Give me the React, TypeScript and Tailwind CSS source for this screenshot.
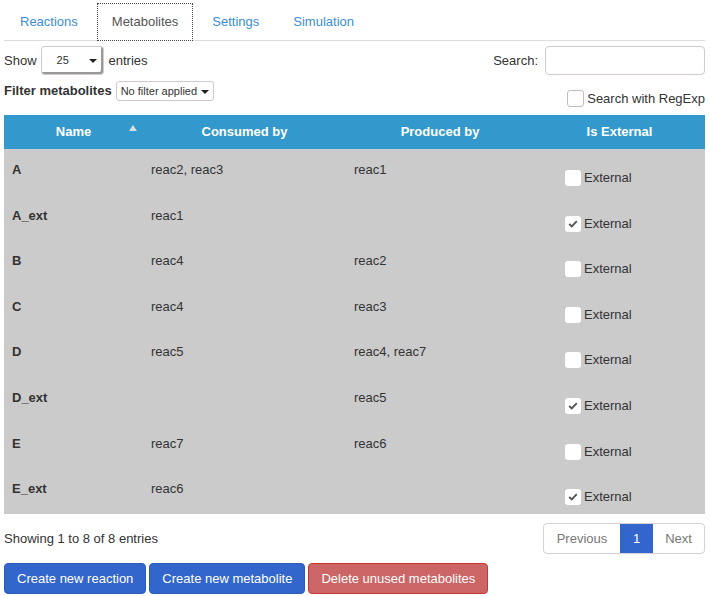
import React from "react";

const rows: { name: string; consumed: string; produced: string; ext: boolean }[] = [
  { name: "A", consumed: "reac2, reac3", produced: "reac1", ext: false },
  { name: "A_ext", consumed: "reac1", produced: "", ext: true },
  { name: "B", consumed: "reac4", produced: "reac2", ext: false },
  { name: "C", consumed: "reac4", produced: "reac3", ext: false },
  { name: "D", consumed: "reac5", produced: "reac4, reac7", ext: false },
  { name: "D_ext", consumed: "", produced: "reac5", ext: true },
  { name: "E", consumed: "reac7", produced: "reac6", ext: false },
  { name: "E_ext", consumed: "reac6", produced: "", ext: true },
];

function Check({ checked }: { checked: boolean }) {
  return (
    <span className="inline-flex h-[16px] w-[16px] items-center justify-center rounded-[3px] bg-white">
      {checked && (
        <svg width="10" height="8" viewBox="0 0 10 8">
          <path d="M1.2 4 L3.8 6.4 L8.8 1.2" fill="none" stroke="#555" strokeWidth="1.9" />
        </svg>
      )}
    </span>
  );
}

export default function App() {
  const tabs = ["Reactions", "Metabolites", "Settings", "Simulation"];
  return (
    <div
      className="w-[710px] h-[596px] bg-white px-[4px] text-[13px] text-[#333]"
      style={{ fontFamily: '"Liberation Sans", Arial, sans-serif' }}
    >
      {/* Tabs */}
      <div className="flex gap-[4px] border-b border-[#ddd] pl-[1px] pt-[3px] w-[701px]">
        {tabs.map((t) => (
          <div
            key={t}
            className={
              t === "Metabolites"
                ? "mb-[-1px] flex h-[38px] items-center border border-dotted border-[#444] bg-white px-[14px] text-[#555]"
                : "mb-[-1px] flex h-[38px] items-center border border-transparent px-[14px] text-[#3a8ed6]"
            }
          >
            {t}
          </div>
        ))}
      </div>

      {/* Show / Search */}
      <div className="mt-[5px] flex h-[29px] w-[701px] items-center justify-between">
        <div className="flex items-center">
          <span>Show</span>
          <div className="relative ml-[4px] flex h-[29px] w-[63px] items-center rounded-[3px] border border-[#d3c8d3] pl-[15px] text-[11px] shadow-[inset_-2px_-2px_0_#999]">
            25
            <span className="absolute right-[6px] top-[12px] h-0 w-0 border-l-[4px] border-r-[4px] border-t-[4px] border-l-transparent border-r-transparent border-t-[#222]" />
          </div>
          <span className="ml-[5px]">entries</span>
        </div>
        <div className="flex items-center">
          <span>Search:</span>
          <div className="ml-[7px] h-[29px] w-[160px] rounded-[4px] border border-[#d3c8d3]" />
        </div>
      </div>

      {/* Filter */}
      <div className="relative mt-[6px] h-[34px] w-[701px]">
        <div className="flex items-center">
          <span className="font-bold">Filter metabolites</span>
          <div className="ml-[4px] flex h-[20px] items-center rounded-[3px] border border-[#d3c8d3] px-[4px] text-[11px]">
            No filter applied
            <span className="ml-[4px] mt-[1px] h-0 w-0 border-l-[4px] border-r-[4px] border-t-[4px] border-l-transparent border-r-transparent border-t-[#222]" />
          </div>
        </div>
        <div className="absolute right-0 top-[8px] flex items-center">
          <span className="h-[17px] w-[17px] rounded-[3px] border border-[#c8b8c8] bg-white" />
          <span className="ml-[3px]">Search with RegExp</span>
        </div>
      </div>

      {/* Table */}
      <table className="w-[701px] table-fixed border-collapse">
        <colgroup>
          <col className="w-[139px]" />
          <col className="w-[203px]" />
          <col className="w-[188px]" />
          <col className="w-[171px]" />
        </colgroup>
        <thead>
          <tr className="h-[34px] bg-[#3399cc] text-white">
            <th className="relative font-bold">
              Name
              <span className="absolute left-[125px] top-[10px] h-0 w-0 border-b-[6px] border-l-[4px] border-r-[4px] border-b-[#ddd] border-l-transparent border-r-transparent" />
            </th>
            <th className="font-bold">Consumed by</th>
            <th className="font-bold">Produced by</th>
            <th className="font-bold">Is External</th>
          </tr>
        </thead>
        <tbody className="bg-[#cbcbcb]">
          {rows.map((r) => (
            <tr key={r.name} className="h-[45.6px] align-top">
              <td className="px-[8px] pt-[13px] font-bold leading-4">{r.name}</td>
              <td className="px-[8px] pt-[13px] leading-4">{r.consumed}</td>
              <td className="px-[8px] pt-[13px] leading-4">{r.produced}</td>
              <td className="pl-[31px] pt-[19px]">
                <div className="flex items-center">
                  <Check checked={r.ext} />
                  <span className="ml-[3px] leading-5">External</span>
                </div>
              </td>
            </tr>
          ))}
        </tbody>
      </table>

      {/* Footer */}
      <div className="mt-[9px] flex w-[701px] items-center justify-between">
        <span>Showing 1 to 8 of 8 entries</span>
        <div className="flex h-[31px] overflow-hidden rounded-[4px] border border-[#d8cfd8]">
          <span className="flex w-[76px] items-center justify-center text-[#777]">Previous</span>
          <span className="flex w-[33px] items-center justify-center bg-[#3366cc] text-white">1</span>
          <span className="flex w-[51px] items-center justify-center text-[#777]">Next</span>
        </div>
      </div>

      <div className="mt-[9px] flex gap-[3px]">
        <button className="h-[31px] rounded-[4px] border border-[#2d5cb8] bg-[#3366cc] px-[12px] text-white">
          Create new reaction
        </button>
        <button className="h-[31px] rounded-[4px] border border-[#2d5cb8] bg-[#3366cc] px-[12px] text-white">
          Create new metabolite
        </button>
        <button className="h-[31px] rounded-[4px] border border-[#cc3333] bg-[#cc6666] px-[12px] text-white">
          Delete unused metabolites
        </button>
      </div>
    </div>
  );
}
